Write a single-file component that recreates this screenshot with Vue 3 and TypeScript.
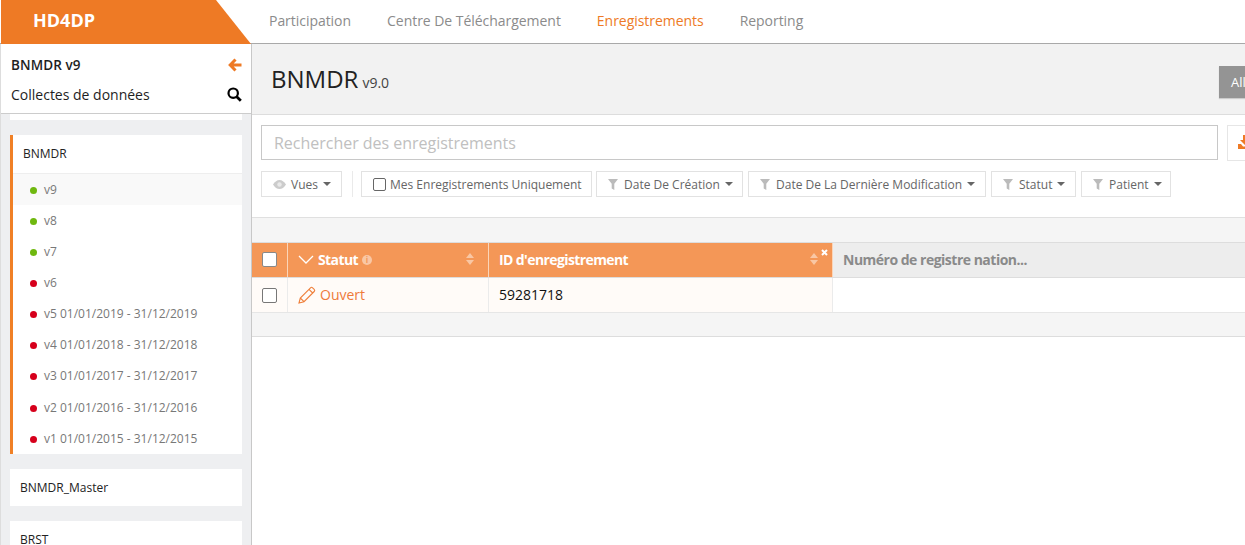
<script setup lang="ts">
interface Version { label: string; active: boolean; selected?: boolean }
const versions: Version[] = [
  { label: 'v9', active: true, selected: true },
  { label: 'v8', active: true },
  { label: 'v7', active: true },
  { label: 'v6', active: false },
  { label: 'v5 01/01/2019 - 31/12/2019', active: false },
  { label: 'v4 01/01/2018 - 31/12/2018', active: false },
  { label: 'v3 01/01/2017 - 31/12/2017', active: false },
  { label: 'v2 01/01/2016 - 31/12/2016', active: false },
  { label: 'v1 01/01/2015 - 31/12/2015', active: false },
]
const nav = ['Participation', 'Centre De Téléchargement', 'Enregistrements', 'Reporting']
const filters = [
  { label: 'Date De Création', width: 147 },
  { label: 'Date De La Dernière Modification', width: 238 },
  { label: 'Statut', width: 85 },
  { label: 'Patient', width: 90 },
]
</script>

<template>
  <div class="page">
    <header class="topbar">
      <div class="logo"><span>HD4DP</span></div>
      <nav class="nav">
        <a v-for="n in nav" :key="n" :class="{ on: n === 'Enregistrements' }">{{ n }}</a>
      </nav>
    </header>
    <div class="body">
      <aside class="side">
        <div class="side-head">
          <div class="sh-row">
            <b>BNMDR v9</b>
            <svg width="14" height="14" viewBox="0 0 14 14"><path d="M7.500 1.500 2.200 7l5.300 5.500M2.500 7H13.500" fill="none" stroke="#ee7a25" stroke-width="3"/></svg>
          </div>
          <div class="sh-row second">
            <span>Collectes de données</span>
            <svg width="15" height="15" viewBox="0 0 15 15"><circle cx="6.200" cy="6.200" r="4.700" fill="none" stroke="#000" stroke-width="2.200"/><path d="M9.500 9.500l4.300 4.300" stroke="#000" stroke-width="2.800"/></svg>
          </div>
        </div>
        <div class="side-list">
          <div class="stub"></div>
          <div class="card open">
            <div class="card-title">BNMDR</div>
            <div v-for="v in versions" :key="v.label" class="ver" :class="{ sel: v.selected }">
              <i class="dot" :class="v.active ? 'green' : 'red'"></i>{{ v.label }}
            </div>
          </div>
          <div class="card plain">BNMDR_Master</div>
          <div class="card plain">BRST</div>
        </div>
      </aside>
      <main class="main">
        <div class="title-bar">
          <h1>BNMDR<small>v9.0</small></h1>
          <button class="all">All</button>
        </div>
        <div class="search-row">
          <div class="search">Rechercher des enregistrements</div>
          <button class="dl">
            <svg width="14" height="14" viewBox="0 0 14 14"><path d="M5 0h4v5h3L7 10 2 5h3zM0 9h3l2 2.500h4L11 9h3v5H0z" fill="#ee7a25"/></svg>
          </button>
        </div>
        <div class="tools">
          <div class="btn views">
            <svg class="eye" width="13" height="9" viewBox="0 0 13 9"><path d="M0 4.500C2 1.500 4 0 6.500 0S11 1.500 13 4.500C11 7.500 9 9 6.500 9S2 7.500 0 4.500z" fill="#ccc"/><circle cx="6.500" cy="4.500" r="2.200" fill="#e9e9e9"/></svg>
            Vues<i class="caret"></i>
          </div>
          <span class="sep"></span>
          <label class="btn mine"><input type="checkbox" />Mes Enregistrements Uniquement</label>
          <div v-for="f in filters" :key="f.label" class="btn filter" :style="{ width: f.width + 'px' }">
            <svg width="10" height="11" viewBox="0 0 10 11"><path d="M0 0h10L6.300 4.800V11L3.700 9.500V4.800z" fill="#bbb"/></svg>
            {{ f.label }}<i class="caret"></i>
          </div>
        </div>
        <div class="band"></div>
        <div class="thead">
          <div class="c-check hd"><span class="box"></span></div>
          <div class="c-status hd">
            <svg class="chev" width="16" height="9" viewBox="0 0 16 9"><path d="M1 1l7 7 7-7" fill="none" stroke="#fff" stroke-width="1.300"/></svg>
            <b>Statut</b>
            <span class="info">i</span>
            <span class="sort"><i class="up"></i><i class="down"></i></span>
          </div>
          <div class="c-id hd">
            <b>ID d'enregistrement</b>
            <span class="sort"><i class="up"></i><i class="down"></i></span>
            <svg class="close" width="7" height="7" viewBox="0 0 7 7"><path d="M1 1l5 5M6 1L1 6" stroke="#fff" stroke-width="2"/></svg>
          </div>
          <div class="c-rest"><b>Numéro de registre nation...</b></div>
        </div>
        <div class="trow">
          <div class="c-check"><span class="box dark"></span></div>
          <div class="c-status">
            <svg width="18" height="18" viewBox="0 0 18 18"><path d="M1 17l1.300-5L12.500 1.800a1.500 1.500 0 0 1 2.100 0l1.600 1.600a1.500 1.500 0 0 1 0 2.100L6 15.700zM2.300 12L6 15.700M11 3.300l3.700 3.700" fill="none" stroke="#ef7f3a" stroke-width="1.100"/></svg>
            <span class="open-txt">Ouvert</span>
          </div>
          <div class="c-id">59281718</div>
          <div class="c-blank"></div>
        </div>
        <div class="tfoot"></div>
      </main>
    </div>
  </div>
</template>

<style>
html, body { margin: 0; overflow: hidden; background: #fff; }
</style>

<style scoped>
.page { width: 1245px; height: 545px; overflow: hidden; font-family: "Open Sans", sans-serif; font-size: 13px; color: #222; background: #fff; }
.topbar { height: 44px; box-sizing: border-box; border-bottom: 1px solid #a9a9a9; display: flex; }
.logo { width: 251px; height: 44px; margin-left: 1px; flex: none; background: #ee7a25; clip-path: polygon(0 0, 215px 0, 250px 44px, 0 44px); color: #fff; font-size: 18px; font-weight: 700; line-height: 41px; }
.logo span { margin-left: 32px; }
.nav { display: flex; gap: 36px; margin-left: 17px; font-size: 14px; line-height: 42px; color: #8b8b8b; letter-spacing: -0.04px; }
.nav .on { color: #ee7a25; }
.body { display: flex; height: 501px; }
.side { width: 252px; flex: none; box-sizing: border-box; border-right: 1px solid #c8c8c8; border-left: 1px solid #ddd; display: flex; flex-direction: column; }
.side-head { height: 70px; box-sizing: border-box; border-bottom: 1px solid #ccc; background: #fff; padding: 9px 9px 0 10px; }
.sh-row { display: flex; justify-content: space-between; align-items: center; height: 24px; color: #1e1e1e; font-size: 14px; }
.sh-row b { font-size: 13.500px; font-weight: 600; letter-spacing: 0.1px; }
.sh-row.second { margin-top: 5px; }
.side-list { flex: 1; background: #eeeff1; padding: 0 9px; overflow: hidden; }
.stub { height: 6px; background: #fff; margin-bottom: 15px; }
.card { background: #fff; width: 232px; box-sizing: border-box; }
.card.open { border-left: 3px solid #f08026; height: 319px; }
.card-title { height: 39px; box-sizing: border-box; border-bottom: 1px solid #eee; padding-left: 10px; line-height: 37px; font-size: 12px; color: #222; }
.ver { height: 31.150px; padding-left: 17px; display: flex; align-items: center; font-size: 12px; color: #787878; padding-bottom: 1px; box-sizing: border-box; }
.ver.sel { background: #f9f9f9; }
.dot { width: 7px; height: 7px; border-radius: 50%; margin-right: 7px; margin-top: 2px; }
.green { background: #6fb80f; }
.red { background: #d6001c; }
.plain { height: 37px; margin-top: 15px; padding-left: 10px; line-height: 37px; font-size: 12px; color: #222; }
.main { flex: 1; min-width: 0; overflow: hidden; }
.title-bar { height: 71px; box-sizing: border-box; background: #f2f2f2; border-bottom: 1px solid #ddd; padding-left: 19px; display: flex; justify-content: space-between; align-items: flex-start; }
h1 { margin: 18px 0 0; font-size: 24px; font-weight: 400; line-height: 34px; color: #222; }
h1 small { font-size: 14px; color: #444; margin-left: 4px; }
.all { width: 26px; height: 32px; margin-top: 22px; border: 0; padding: 0 0 0 12px; background: #949494; color: #fff; font: 13px "Open Sans", sans-serif; text-align: left; overflow: hidden; box-shadow: 0 1px 1px #ccc; }
.search-row { display: flex; margin: 10px 0 0 9px; gap: 9px; height: 35px; }
.search { width: 957px; box-sizing: border-box; flex: none; border: 1px solid #c8c8c8; font-size: 16px; line-height: 35px; padding-left: 12px; color: #c0c0c0; letter-spacing: -0.02px; }
.dl { width: 40px; flex: none; height: 36px; background: #fff; border: 1px solid #e6e6e6; padding: 0 0 0 10px; text-align: left; }
.tools { display: flex; margin: 11px 0 0 9px; height: 26px; align-items: stretch; gap: 5px; }
.btn { box-sizing: border-box; border: 1px solid #e2e2e2; display: flex; align-items: center; font-size: 12px; color: #666; white-space: nowrap; padding: 0 11px; height: 26px; flex: none; }
.btn svg { flex: none; }
.views { width: 81px; padding: 0 0 0 11px; }
.eye { margin-right: 5px; }
.sep { width: 1px; background: #eaeaea; margin: 0 3px 0 5px; }
.mine { width: 231px; padding-left: 11px; margin-right: -1px; }
.mine input { width: 13px; height: 13px; margin: 0 4px 0 0; appearance: none; box-sizing: border-box; border: 1px solid #666; border-radius: 2px; background: #fff; flex: none; }
.filter { padding-right: 0; }
.filter svg { margin-right: 6px; }
.caret { width: 0; height: 0; border-left: 4px solid transparent; border-right: 4px solid transparent; border-top: 4px solid #666; margin-left: 5px; }
.band { height: 25px; box-sizing: border-box; margin-top: 20px; background: #f5f5f5; border-top: 1px solid #e0e0e0; }
.thead, .trow { display: flex; width: 1300px; }
.thead { height: 36px; box-sizing: border-box; background: #ededed; border-top: 1px solid #ddd; border-bottom: 1px solid #ddd; }
.thead > div { padding-bottom: 2px; box-sizing: border-box; }
.trow { height: 35px; box-sizing: border-box; border-bottom: 1px solid #e6e6e6; }
.c-check { width: 36px; flex: none; display: flex; align-items: center; justify-content: center; box-sizing: border-box; border-right: 1px solid #ebebeb; background: #fffbf8; }
.c-status { width: 201px; flex: none; box-sizing: border-box; border-right: 1px solid #ebebeb; background: #fffbf8; display: flex; align-items: center; padding-left: 10px; position: relative; }
.c-id { width: 344px; flex: none; box-sizing: border-box; border-right: 1px solid #ebebeb; background: #fffbf8; display: flex; align-items: center; padding-left: 10px; position: relative; font-size: 14px; color: #111; }
.hd { background: #f49757; border-right-color: #fbd5b8; color: #fff; }
.hd b { font-size: 14px; font-weight: 700; letter-spacing: -0.6px; }
.c-rest { flex: 1; display: flex; align-items: center; padding-left: 10px; color: #8a8a8a; }
.c-rest b { font-size: 14px; font-weight: 700; letter-spacing: -0.5px; }
.c-blank { flex: 1; }
.box { width: 15px; height: 15px; box-sizing: border-box; border-radius: 2px; background: #fff; border: 1px solid #888; }
.chev { margin-right: 4px; }
.info { width: 10px; height: 10px; margin: 1px 0 0 4px; border-radius: 50%; background: #f9c7a4; color: #f49757; font-size: 8px; line-height: 10px; font-weight: 700; text-align: center; }
.sort { position: absolute; right: 14px; top: 10px; display: flex; flex-direction: column; gap: 2px; }
.sort i { width: 0; height: 0; border-left: 4px solid transparent; border-right: 4px solid transparent; }
.sort .up { border-bottom: 5px solid #f9c7a4; }
.sort .down { border-top: 5px solid #f9c7a4; }
.c-id .sort { right: 14px; }
.close { position: absolute; right: 4px; top: 6px; }
.open-txt { color: #ee7a3a; font-size: 14px; margin-left: 4px; padding-bottom: 2px; }
.trow .c-id { padding-bottom: 2px; }
.box.dark { border-color: #777; }
.trow .c-status { padding-left: 10px; }
.tfoot { height: 23px; background: #f5f5f5; border-bottom: 1px solid #ddd; }
</style>
